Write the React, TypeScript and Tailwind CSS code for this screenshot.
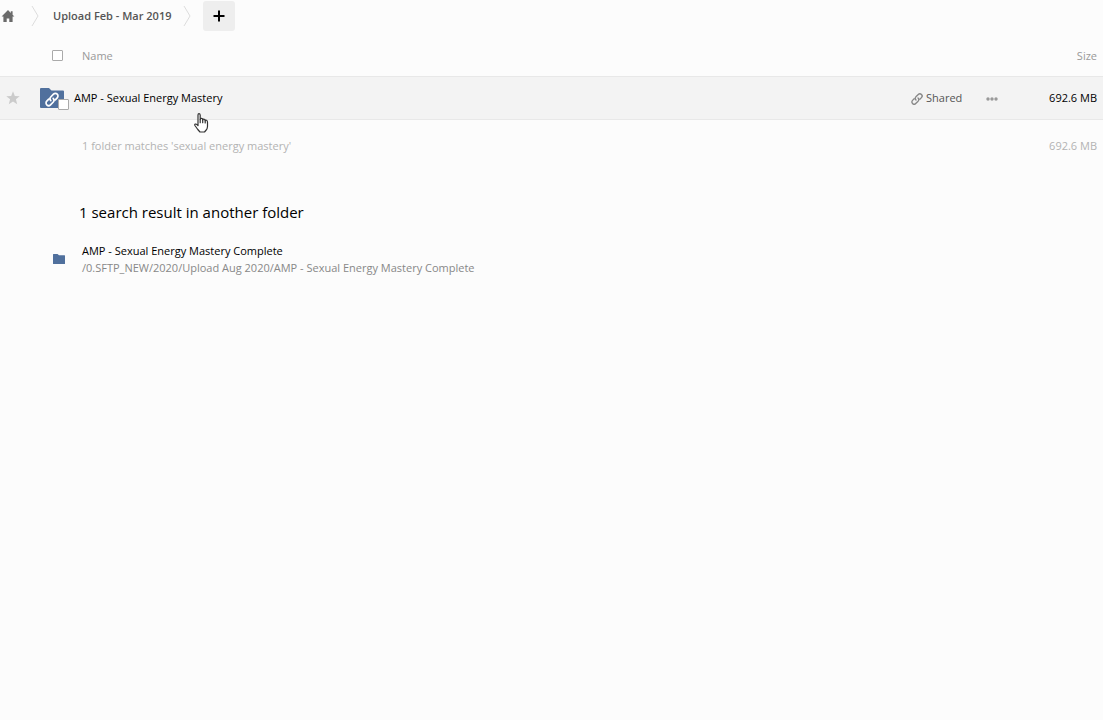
import React from "react";

function HomeIcon() {
  return (
    <svg viewBox="0 0 14 12" className="h-3 w-3.5" fill="#6b6b6b" aria-hidden="true">
      <path d="M7 0 0.6 6.6H2.4V12H5.7V8.4H8.3V12H11.6V6.6H13.4L11.6 4.7V1.2H9.8V2.9Z" />
    </svg>
  );
}

function Separator() {
  return (
    <svg viewBox="0 0 8 20" className="h-5 w-2 shrink-0" fill="none" stroke="#dcdcdc" aria-hidden="true">
      <path d="M1 0 7 10 1 20" />
    </svg>
  );
}

function LinkShape() {
  return (
    <g fill="none" strokeLinecap="round" strokeLinejoin="round">
      <path d="M6.8 9.1a2.6 2.6 0 0 1-.1-3.6L9.5 2.7a2.6 2.6 0 0 1 3.7 3.7L11.3 8.3" />
      <path d="M9.2 6.9a2.6 2.6 0 0 1 .1 3.6L6.5 13.3a2.6 2.6 0 0 1-3.7-3.7L4.7 7.7" />
    </g>
  );
}

function SharedFolderIcon() {
  return (
    <svg viewBox="0 0 24 20" className="h-5 w-6" aria-hidden="true">
      <path d="M0 1Q0 0 1 0H9L11.500 2.500H23Q24 2.500 24 3.500V19Q24 20 23 20H1Q0 20 0 19Z" fill="#50709d" />
      <g transform="translate(4 3.500)" stroke="#fff" strokeWidth="1.700">
        <LinkShape />
      </g>
    </svg>
  );
}

function PointerCursor() {
  return (
    <svg
      viewBox="0 0 16 20"
      className="pointer-events-none absolute left-[194px] top-[113px] h-5 w-4"
      fill="#fff"
      stroke="#333"
      strokeWidth="1.200"
      strokeLinejoin="round"
      strokeLinecap="round"
      aria-hidden="true"
    >
      <path d="M4 2Q4 .7 5 .7T6.200 2V6.500Q6.300 5.300 7.500 5.400Q8.700 5.500 8.700 7Q9 6 10 6.200Q11.200 6.400 11.200 7.700Q11.500 7 12.500 7.300Q13.600 7.700 13.500 9.500V13.500Q13.300 16 12.200 17L10.500 19H6L3.800 16.500L.9 12.500Q.4 11.500 1.200 11.100Q2.200 10.700 3 11.700L4 12.700Z" />
      <path d="M6.200 6.500V9.700M8.700 7V9.700M11.200 7.700V10" fill="none" />
    </svg>
  );
}

export default function App() {
  return (
    <div className="relative min-h-screen bg-[#fcfcfc] font-['Open_Sans',sans-serif] text-[11px] leading-[17px] text-black">
      <nav className="flex h-8 items-center pb-px" aria-label="Breadcrumb">
        <a href="#home" aria-label="Home" className="mr-4 ml-px">
          <HomeIcon />
        </a>
        <Separator />
        <a href="#folder" className="mr-3 ml-3.5 font-semibold text-[#555]">
          Upload Feb - Mar 2019
        </a>
        <Separator />
        <button
          type="button"
          aria-label="New"
          className="mt-px ml-3 flex h-[30px] w-8 items-center justify-center rounded-[3px] bg-[#eee]"
        >
          <svg viewBox="0 0 12 12" className="h-3 w-3" stroke="#000" strokeWidth="2" aria-hidden="true">
            <path d="M6 .5V11.500M.5 6H11.500" />
          </svg>
        </button>
      </nav>

      <main>
        <table className="w-full table-fixed border-collapse">
          <colgroup>
            <col className="w-10" />
            <col className="w-[34px]" />
            <col />
            <col className="w-[72px]" />
            <col className="w-10" />
            <col className="w-[98px]" />
          </colgroup>
          <thead>
            <tr className="h-11 text-[#999]">
              <th />
              <th className="px-0 pt-1 pb-0 text-left align-middle font-normal">
                <input
                  type="checkbox"
                  aria-label="Select all"
                  className="ml-3 block h-[11px] w-[11px] appearance-none rounded-[1px] border border-[#aaa] bg-white"
                />
              </th>
              <th className="pt-1 pr-0 pb-0 pl-2 text-left font-normal">Name</th>
              <th />
              <th />
              <th className="pt-1 pr-1.5 pb-0 pl-0 text-right font-normal">Size</th>
            </tr>
          </thead>
          <tbody>
            <tr className="h-[43px] border-y border-[#e8e8e8] bg-[#f3f3f3]">
              <td className="p-0">
                <button type="button" aria-label="Favorite" className="ml-1.5 block">
                  <svg viewBox="0 0 14 14" className="h-3.5 w-3.5" fill="#cbcbcb" aria-hidden="true">
                    <path d="M7 .3 8.800 4.900 13.700 5.200 9.900 8.300 11.200 13.200 7 10.500 2.800 13.200 4.100 8.300.3 5.200 5.200 4.900Z" />
                  </svg>
                </button>
              </td>
              <td className="p-0">
                <div className="relative w-6">
                  <SharedFolderIcon />
                  <input
                    type="checkbox"
                    aria-label="Select AMP - Sexual Energy Mastery"
                    className="absolute -right-[5px] -bottom-0.5 h-[11px] w-[11px] appearance-none rounded-[1px] border border-[#aaa] bg-white"
                  />
                </div>
              </td>
              <td className="p-0">
                <a href="#amp">AMP - Sexual Energy Mastery</a>
              </td>
              <td className="p-0">
                <button type="button" className="ml-[18px] flex items-center gap-[3px] text-[#555]">
                  <svg viewBox="1 1 14 14" className="mt-0.5 h-3 w-3 shrink-0" stroke="#888" strokeWidth="1.600" aria-hidden="true">
                    <LinkShape />
                  </svg>
                  Shared
                </button>
              </td>
              <td className="p-0">
                <button type="button" aria-label="More actions" className="mt-0.5 ml-[21px] block">
                  <svg viewBox="0 0 12 4" className="h-1 w-3" fill="#999" aria-hidden="true">
                    <circle cx="2" cy="2" r="1.700" />
                    <circle cx="6" cy="2" r="1.700" />
                    <circle cx="10" cy="2" r="1.700" />
                  </svg>
                </button>
              </td>
              <td className="py-0 pr-1.5 pl-0 text-right">692.6 MB</td>
            </tr>
          </tbody>
          <tfoot>
            <tr className="h-[53px] text-[#b3b3b3]">
              <td />
              <td />
              <td className="py-0 pr-0 pl-2">1 folder matches 'sexual energy mastery'</td>
              <td />
              <td />
              <td className="py-0 pr-1.5 pl-0 text-right">692.6 MB</td>
            </tr>
          </tfoot>
        </table>

        <section className="pt-7">
          <h2 className="pl-[79px] text-[15px] leading-6">1 search result in another folder</h2>
          <a href="#result" className="mt-[18px] flex items-center">
            <svg viewBox="0 0 12 10" className="mr-[17px] ml-[53px] h-2.5 w-3 shrink-0" fill="#50709d" aria-hidden="true">
              <path d="M0 .5Q0 0 .5 0H4.500L6 1.300H11.500Q12 1.300 12 1.800V9.500Q12 10 11.500 10H.5Q0 10 0 9.500Z" />
            </svg>
            <span className="flex flex-col">
              <span>AMP - Sexual Energy Mastery Complete</span>
              <span className="text-[#888]">/0.SFTP_NEW/2020/Upload Aug 2020/AMP - Sexual Energy Mastery Complete</span>
            </span>
          </a>
        </section>
      </main>
      <PointerCursor />
    </div>
  );
}
